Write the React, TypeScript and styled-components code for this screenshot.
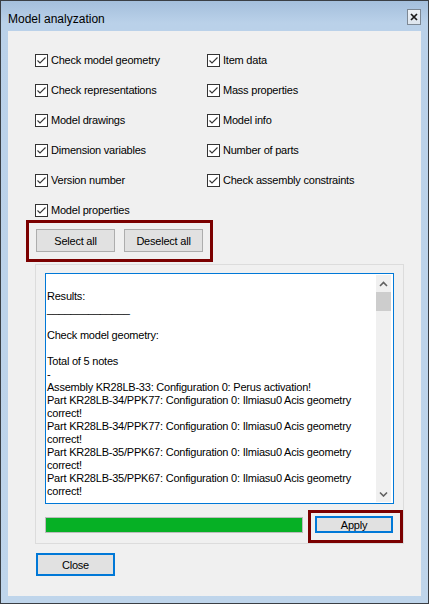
import React from "react";
import styled, { createGlobalStyle } from "styled-components";

const GlobalStyle = createGlobalStyle`
  html, body {
    margin: 0;
    padding: 0;
    background: #f0f0f0;
  }
  body {
    font-family: "Liberation Sans", Arial, sans-serif;
    font-size: 11px;
    letter-spacing: -0.22px;
    color: #000;
  }
`;

const checks: string[][] = [
  ["Check model geometry", "Item data"],
  ["Check representations", "Mass properties"],
  ["Model drawings", "Model info"],
  ["Dimension variables", "Number of parts"],
  ["Version number", "Check assembly constraints"],
  ["Model properties"],
];

const resultLines = [
  "",
  "Results:",
  "______________",
  "",
  "Check model geometry:",
  "",
  "Total of 5 notes",
  "-",
  "Assembly KR28LB-33: Configuration 0: Perus activation!",
  "Part KR28LB-34/PPK77: Configuration 0: Ilmiasu0 Acis geometry",
  "correct!",
  "Part KR28LB-34/PPK77: Configuration 0: Ilmiasu0 Acis geometry",
  "correct!",
  "Part KR28LB-35/PPK67: Configuration 0: Ilmiasu0 Acis geometry",
  "correct!",
  "Part KR28LB-35/PPK67: Configuration 0: Ilmiasu0 Acis geometry",
  "correct!",
];

const Chevron = ({ down }: { down?: boolean }) => (
  <svg width="9" height="6" viewBox="0 0 9 6">
    <path
      d={down ? "M1 1.5 L4.5 5 L8 1.5" : "M1 5 L4.5 1.5 L8 5"}
      fill="none"
      stroke="#606060"
      strokeWidth="1.6"
    />
  </svg>
);

const CheckItem = ({ label }: { label: string }) => (
  <CheckRow>
    <CheckBox>
      <svg width="11" height="11" viewBox="0 0 11 11">
        <path d="M1.5 5.5 L4 8 L9.5 2.5" fill="none" stroke="#333" strokeWidth="1.1" />
      </svg>
    </CheckBox>
    <span>{label}</span>
  </CheckRow>
);

export default function App() {
  return (
    <>
      <GlobalStyle />
      <Window>
        <TitleBar>
          <Title>Model analyzation</Title>
          <CloseBox>
            <svg width="8" height="8" viewBox="0 0 8 8">
              <path d="M1 1 L7 7 M7 1 L1 7" stroke="#1a1a1a" strokeWidth="1.7" />
            </svg>
          </CloseBox>
        </TitleBar>
        <Client>
          <CheckGrid>
            {checks.map((row) =>
              row.map((label) => <CheckItem key={label} label={label} />)
            )}
          </CheckGrid>

          <SelectHighlight>
            <Button>Select all</Button>
            <Button>Deselect all</Button>
          </SelectHighlight>

          <Panel>
            <TextBox>
              <TextLines>
                {resultLines.map((line, i) => (
                  <Line key={i}>{line || "\u00a0"}</Line>
                ))}
              </TextLines>
              <ScrollBar>
                <ScrollArrow>
                  <Chevron />
                </ScrollArrow>
                <Thumb />
                <Track />
                <ScrollArrow>
                  <Chevron down />
                </ScrollArrow>
              </ScrollBar>
            </TextBox>
            <BottomRow>
              <Progress>
                <ProgressFill style={{ width: "100%" }} />
              </Progress>
              <ApplyHighlight>
                <Button $focused $width={78} $height={17}>
                  Apply
                </Button>
              </ApplyHighlight>
            </BottomRow>
          </Panel>

          <CloseButton $focused>Close</CloseButton>
        </Client>
      </Window>
    </>
  );
}

const Window = styled.div`
  width: 429px;
  height: 604px;
  box-sizing: border-box;
  border: 1px solid #3a3f45;
  padding: 0 7px 7px 7px;
  background: linear-gradient(#a4bfdc 0px, #bad1e9 22px, #bfd5eb 100%);
  display: flex;
  flex-direction: column;
`;

const TitleBar = styled.div`
  height: 30px;
  display: flex;
  justify-content: space-between;
  align-items: flex-start;
  flex-shrink: 0;
`;

const Title = styled.div`
  margin-top: 11px;
  font-size: 12px;
  line-height: 14px;
  letter-spacing: 0;
  color: #000;
`;

const CloseBox = styled.div`
  margin-top: 8px;
  width: 14px;
  height: 16px;
  box-sizing: border-box;
  border: 1px solid #7d8894;
  background: linear-gradient(#eef2f6, #dde5ee);
  display: flex;
  align-items: center;
  justify-content: center;
`;

const Client = styled.div`
  flex: 1;
  background: #f0f0f0;
  display: flex;
  flex-direction: column;
  align-items: flex-start;
  padding: 21px 0 0 27px;
`;

const CheckGrid = styled.div`
  display: grid;
  grid-template-columns: 172px 172px;
  grid-auto-rows: 16px;
  row-gap: 14px;
`;

const CheckRow = styled.div`
  display: flex;
  align-items: center;
  gap: 3px;
  white-space: nowrap;
  line-height: 16px;
`;

const CheckBox = styled.span`
  width: 13px;
  height: 13px;
  box-sizing: border-box;
  border: 1px solid #333;
  background: #fff;
  display: flex;
  align-items: center;
  justify-content: center;
`;

const SelectHighlight = styled.div`
  margin: 2px 0 0 -9px;
  border: 3px solid #7b0000;
  padding: 6px 7px 7px 7px;
  display: flex;
  gap: 9px;
`;

const Button = styled.div<{ $focused?: boolean; $width?: number; $height?: number }>`
  width: ${(p) => p.$width ?? 79}px;
  height: ${(p) => p.$height ?? 23}px;
  box-sizing: border-box;
  background: #e1e1e1;
  border: ${(p) => (p.$focused ? "2px solid #0078d7" : "1px solid #adadad")};
  display: flex;
  align-items: center;
  justify-content: center;
  font-size: 11px;
  color: #000;
`;

const CloseButton = styled(Button)`
  margin: 9px 0 0 1px;
`;

const Panel = styled.div`
  margin-top: 2px;
  width: 369px;
  box-sizing: border-box;
  border: 1px solid #dcdcdc;
  padding: 8px 9px 0 9px;
  display: flex;
  flex-direction: column;
`;

const TextBox = styled.div`
  height: 231px;
  box-sizing: border-box;
  border: 1px solid #0078d7;
  background: #fff;
  display: flex;
  padding: 1px 2px 1px 0;
  overflow: hidden;
`;

const TextLines = styled.div`
  flex: 1;
  padding: 2px 0 0 1px;
  overflow: hidden;
`;

const Line = styled.div`
  font-size: 11px;
  line-height: 13px;
  white-space: nowrap;
  color: #000;
`;

const ScrollBar = styled.div`
  width: 15px;
  background: #f0f0f0;
  display: flex;
  flex-direction: column;
`;

const ScrollArrow = styled.div`
  height: 17px;
  display: flex;
  align-items: center;
  justify-content: center;
`;

const Thumb = styled.div`
  height: 19px;
  background: #cdcdcd;
`;

const Track = styled.div`
  flex: 1;
`;

const BottomRow = styled.div`
  margin: 6px -9px 0 0;
  display: flex;
  gap: 5px;
  align-items: flex-start;
`;

const Progress = styled.div`
  margin-top: 7px;
  width: 258px;
  height: 16px;
  box-sizing: border-box;
  border: 1px solid #bcbcbc;
  background: #e6e6e6;
`;

const ProgressFill = styled.div`
  height: 100%;
  background: #06b025;
`;

const ApplyHighlight = styled.div`
  border: 3px solid #7b0000;
  padding: 3px 7px 7px 4px;
  display: flex;
`;
